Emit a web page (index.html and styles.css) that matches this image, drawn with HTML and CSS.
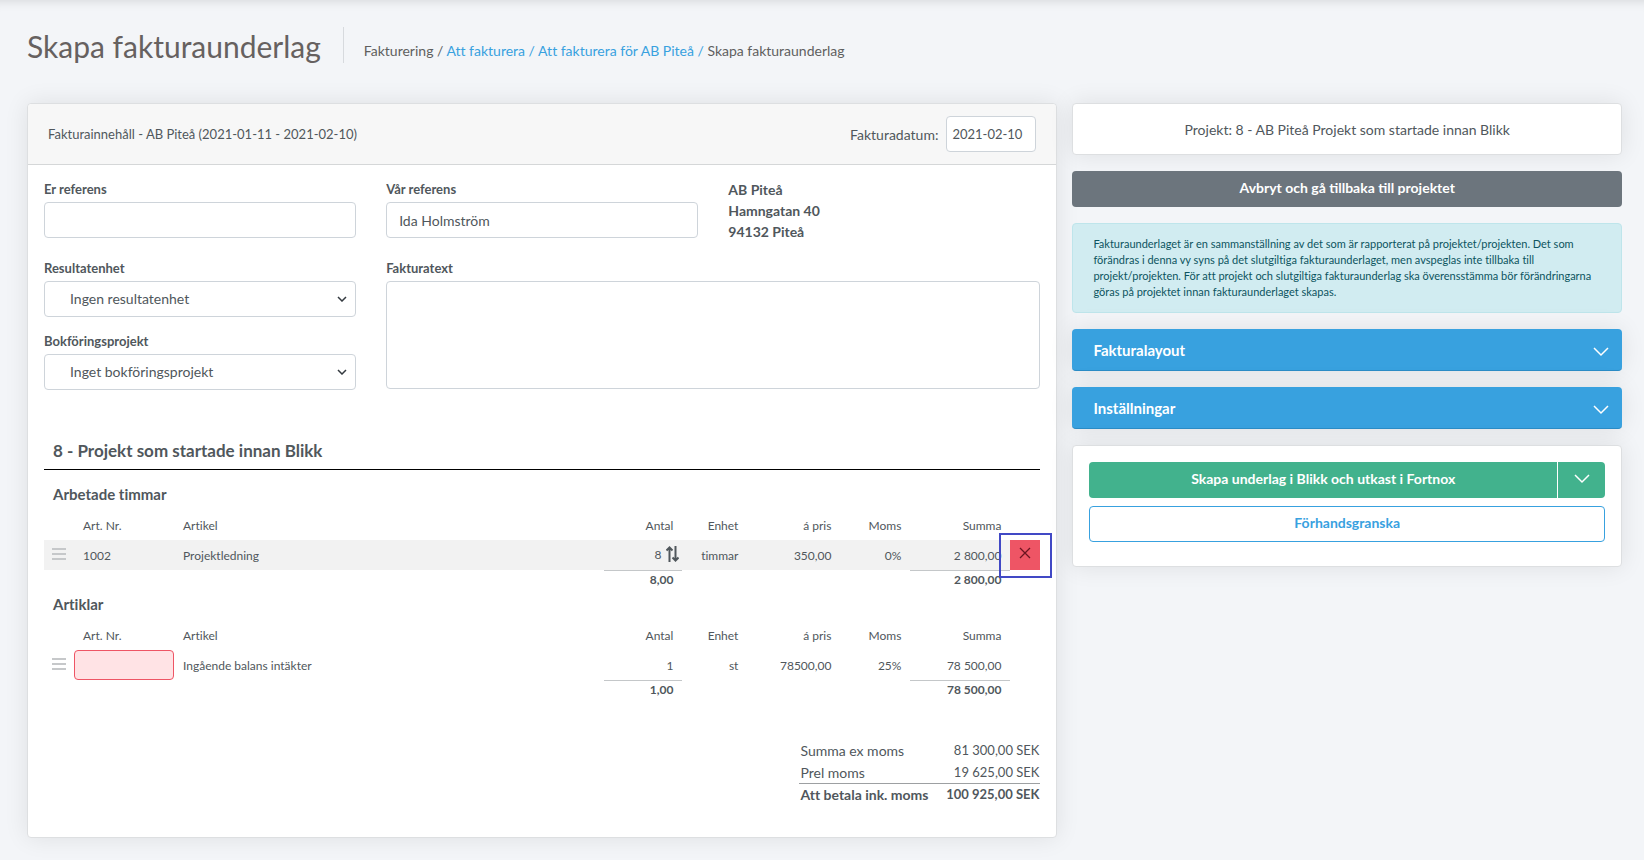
FILE: index.html
```html
<!DOCTYPE html>
<html lang="sv">
<head>
<meta charset="UTF-8">
<meta name="viewport" content="width=device-width, initial-scale=1.0">
<title>Skapa fakturaunderlag</title>
<link rel="stylesheet" href="styles.css">
</head>
<body>
<header class="page-header">
  <h1 class="page-title">Skapa fakturaunderlag</h1>
  <nav class="breadcrumb">
    Fakturering / <a href="#">Att fakturera /</a> <a href="#">Att fakturera för AB Piteå /</a> Skapa fakturaunderlag
  </nav>
</header>

<main class="layout">
  <section class="card">
    <div class="card-header">
      <span class="card-title">Fakturainnehåll - AB Piteå (2021-01-11 - 2021-02-10)</span>
      <div class="date-group">
        <label for="invoiceDate">Fakturadatum:</label>
        <input type="text" class="form-control date-input" id="invoiceDate" value="2021-02-10">
      </div>
    </div>

    <div class="card-body">
      <div class="form-grid">
        <div class="field">
          <label for="yourRef">Er referens</label>
          <input type="text" class="form-control" id="yourRef">
        </div>
        <div class="field">
          <label for="ourRef">Vår referens</label>
          <input type="text" class="form-control" id="ourRef" value="Ida Holmström">
        </div>
        <address class="address">AB Piteå<br>Hamngatan 40<br>94132 Piteå</address>
        <div class="field-stack">
          <div class="field">
            <label for="unit">Resultatenhet</label>
            <div class="select-wrap">
              <select class="form-control" id="unit">
                <option>Ingen resultatenhet</option>
              </select>
              <svg class="select-arrow" viewBox="0 0 10 6"><path d="M1 1l4 4 4-4"/></svg>
            </div>
          </div>
          <div class="field">
            <label for="bookProject">Bokföringsprojekt</label>
            <div class="select-wrap">
              <select class="form-control" id="bookProject">
                <option>Inget bokföringsprojekt</option>
              </select>
              <svg class="select-arrow" viewBox="0 0 10 6"><path d="M1 1l4 4 4-4"/></svg>
            </div>
          </div>
        </div>
        <div class="field field-wide">
          <label for="invoiceText">Fakturatext</label>
          <textarea class="form-control" id="invoiceText"></textarea>
        </div>
      </div>

      <h2 class="project-title">8 - Projekt som startade innan Blikk</h2>

      <h3 class="group-title">Arbetade timmar</h3>
      <table class="lines">
        <colgroup>
          <col class="col-handle"><col class="col-nr"><col><col class="col-qty"><col class="col-unit">
          <col class="col-price"><col class="col-vat"><col class="col-sum"><col class="col-handle">
        </colgroup>
        <thead>
          <tr>
            <th></th>
            <th>Art. Nr.</th>
            <th>Artikel</th>
            <th class="num">Antal</th>
            <th class="num">Enhet</th>
            <th class="num">á pris</th>
            <th class="num">Moms</th>
            <th class="num">Summa</th>
            <th></th>
          </tr>
        </thead>
        <tbody>
          <tr class="active">
            <td class="icon-cell"><svg class="handle" viewBox="0 0 14 12"><path d="M0 1h14M0 6h14M0 11h14"/></svg></td>
            <td>1002</td>
            <td>Projektledning</td>
            <td class="num qty-sort">8<svg class="sort" viewBox="0 0 13 16"><path d="M3.5 16V1.500M0.5 4.500l3-3 3 3M9.500 0v14.500M6.500 11.500l3 3 3-3"/></svg></td>
            <td class="num">timmar</td>
            <td class="num">350,00</td>
            <td class="num">0%</td>
            <td class="num">2 800,00</td>
            <td class="icon-cell remove-cell">
              <button type="button" class="remove" aria-label="Ta bort"><svg viewBox="0 0 12 12"><path d="M1 1l10 10M11 1L1 11"/></svg></button>
            </td>
          </tr>
        </tbody>
        <tfoot>
          <tr>
            <td colspan="3"></td>
            <td class="num total">8,00</td>
            <td colspan="3"></td>
            <td class="num total">2 800,00</td>
            <td></td>
          </tr>
        </tfoot>
      </table>

      <h3 class="group-title">Artiklar</h3>
      <table class="lines">
        <colgroup>
          <col class="col-handle"><col class="col-nr"><col><col class="col-qty"><col class="col-unit">
          <col class="col-price"><col class="col-vat"><col class="col-sum"><col class="col-handle">
        </colgroup>
        <thead>
          <tr>
            <th></th>
            <th>Art. Nr.</th>
            <th>Artikel</th>
            <th class="num">Antal</th>
            <th class="num">Enhet</th>
            <th class="num">á pris</th>
            <th class="num">Moms</th>
            <th class="num">Summa</th>
            <th></th>
          </tr>
        </thead>
        <tbody>
          <tr>
            <td class="icon-cell"><svg class="handle" viewBox="0 0 14 12"><path d="M0 1h14M0 6h14M0 11h14"/></svg></td>
            <td class="icon-cell"><input type="text" class="nr-input" aria-label="Art. Nr."></td>
            <td>Ingående balans intäkter</td>
            <td class="num">1</td>
            <td class="num">st</td>
            <td class="num">78500,00</td>
            <td class="num">25%</td>
            <td class="num">78 500,00</td>
            <td></td>
          </tr>
        </tbody>
        <tfoot>
          <tr>
            <td colspan="3"></td>
            <td class="num total">1,00</td>
            <td colspan="3"></td>
            <td class="num total">78 500,00</td>
            <td></td>
          </tr>
        </tfoot>
      </table>

      <table class="summary">
        <tr><td>Summa ex moms</td><td class="amount">81 300,00 SEK</td></tr>
        <tr><td>Prel moms</td><td class="amount">19 625,00 SEK</td></tr>
        <tr class="grand"><td>Att betala ink. moms</td><td class="amount">100 925,00 SEK</td></tr>
      </table>
    </div>
  </section>

  <aside class="sidebar">
    <div class="card project-card">Projekt: 8 - AB Piteå Projekt som startade innan Blikk</div>
    <button type="button" class="btn btn-secondary">Avbryt och gå tillbaka till projektet</button>
    <div class="alert">Fakturaunderlaget är en sammanställning av det som är rapporterat på projektet/projekten. Det som förändras i denna vy syns på det slutgiltiga fakturaunderlaget, men avspeglas inte tillbaka till projekt/projekten. För att projekt och slutgiltiga fakturaunderlag ska överensstämma bör förändringarna göras på projektet innan fakturaunderlaget skapas.</div>
    <button type="button" class="accordion">Fakturalayout <svg class="chevron" viewBox="0 0 16 10"><path d="M1 1l7 7 7-7"/></svg></button>
    <button type="button" class="accordion">Inställningar <svg class="chevron" viewBox="0 0 16 10"><path d="M1 1l7 7 7-7"/></svg></button>
    <div class="card actions">
      <div class="btn-group">
        <button type="button" class="btn btn-success">Skapa underlag i Blikk och utkast i Fortnox</button>
        <button type="button" class="btn btn-success btn-toggle" aria-label="Fler val"><svg class="chevron" viewBox="0 0 16 10"><path d="M1 1l7 7 7-7"/></svg></button>
      </div>
      <button type="button" class="btn btn-outline">Förhandsgranska</button>
    </div>
  </aside>
</main>
</body>
</html>
```
FILE: styles.css
```css
* {
  box-sizing: border-box;
}

body {
  margin: 0;
  min-height: 100vh;
  padding: 27px 22px 21px 27px;
  font-family: Lato, "Liberation Sans", sans-serif;
  font-size: 14px;
  line-height: 21px;
  font-variant-ligatures: none;
  color: #50575c;
  background-color: #f3f5f8;
  box-shadow: inset 0 12px 12px -12px rgba(0, 0, 0, 0.15);
}

input, select, textarea, button {
  font-family: inherit;
  font-size: 14px;
  color: inherit;
}

/* Page header */
.page-header {
  display: flex;
  height: 36px;
  margin-bottom: 40px;
}

.page-title {
  margin: 0;
  padding-right: 22px;
  border-right: 1px solid #d7dade;
  font-size: 30px;
  font-weight: 400;
  line-height: 38px;
  color: #666160;
}

.breadcrumb {
  padding: 14px 0 0 20px;
  line-height: 20px;
  color: #5f5f5f;
}

.breadcrumb a {
  color: #38a1df;
  text-decoration: none;
}

/* Layout */
.layout {
  display: grid;
  grid-template-columns: minmax(0, 15fr) minmax(0, 8fr);
  gap: 15px;
  align-items: start;
}

.card {
  background-color: #fff;
  border: 1px solid #dddfe1;
  border-radius: 4px;
  box-shadow: 0 0 24px rgba(0, 0, 0, 0.09);
}

.card-header {
  display: flex;
  align-items: center;
  justify-content: space-between;
  height: 61px;
  padding: 0 20px;
  border-bottom: 1px solid #d5d7d8;
  border-radius: 4px 4px 0 0;
  background-color: #f7f7f7;
}

.card-title {
  font-size: 13px;
}

.date-group {
  display: flex;
  align-items: center;
  gap: 8px;
}

.card-body {
  padding: 14px 16px 32px;
}

/* Form */
.form-control {
  display: block;
  width: 100%;
  height: 36px;
  padding: 0 12px;
  border: 1px solid #ced4da;
  border-radius: 4px;
  background-color: #fff;
  outline: none;
}

.date-input {
  width: 90px;
  padding: 0 5px;
  font-size: 13px;
}

.form-grid {
  display: grid;
  grid-template-columns: repeat(3, minmax(0, 1fr));
  gap: 16px 30px;
}

.field label {
  display: block;
  padding-bottom: 2px;
  font-size: 13px;
  font-weight: 700;
}

.field-stack {
  display: grid;
  gap: 14px;
}

.field-wide {
  grid-column: span 2;
}

textarea.form-control {
  height: 108px;
  resize: none;
}

.address {
  font-style: normal;
  font-weight: 700;
}

.select-wrap {
  position: relative;
}

select.form-control {
  appearance: none;
  padding: 0 25px 2px;
}

.select-arrow {
  position: absolute;
  right: 9px;
  top: 15px;
  width: 10px;
  height: 6px;
  fill: none;
  stroke: #343a40;
  stroke-width: 1.5;
}

/* Invoice lines */
.project-title {
  margin: 48px 0 0;
  padding: 0 9px 5px;
  border-bottom: 1px solid #000;
  font-size: 17px;
  font-weight: 700;
  line-height: 26px;
}

.group-title {
  margin: 12px 0 0;
  padding: 0 9px;
  font-size: 15px;
  font-weight: 700;
  line-height: 24px;
}

.lines + .group-title {
  margin-top: 4px;
}

.lines {
  width: 100%;
  border-collapse: separate;
  border-spacing: 0;
  table-layout: fixed;
  font-size: 12px;
  line-height: 17px;
}

.lines th,
.lines td {
  height: 30px;
  padding: 0 9px;
  text-align: left;
  font-weight: 400;
}

.lines th {
  height: 34px;
  padding-top: 4px;
}

.lines .num {
  text-align: right;
}

.lines .icon-cell {
  padding: 0;
  text-align: center;
}

.col-handle {
  width: 30px;
}

.col-nr,
.col-sum {
  width: 100px;
}

.col-qty {
  width: 78px;
}

.col-unit {
  width: 65px;
}

.col-price {
  width: 93px;
}

.col-vat {
  width: 70px;
}

.active td {
  background-color: #f2f2f2;
}

.lines tfoot td {
  height: 18px;
}

.lines tfoot .total {
  border-top: 1px solid #c4c7c9;
  font-weight: 700;
}

.handle {
  display: block;
  width: 14px;
  height: 12px;
  margin: 0 auto 3px 8px;
  stroke: #c6c8ca;
  stroke-width: 2;
}

.lines .qty-sort {
  padding-right: 3px;
}

.sort {
  width: 13px;
  height: 16px;
  margin: 0 0 2px 5px;
  vertical-align: middle;
  fill: none;
  stroke: #50575c;
  stroke-width: 2;
}

.remove-cell {
  position: relative;
}

/* Focus frame around the remove button */
.remove-cell::after {
  content: "";
  position: absolute;
  inset: -7px -12px -8px -11px;
  border: 2px solid #4149c5;
  pointer-events: none;
}

.remove {
  display: block;
  width: 30px;
  height: 30px;
  padding: 0 0 4px;
  border: none;
  background-color: #ee5565;
}

.remove svg {
  display: block;
  width: 12px;
  height: 12px;
  margin: 0 auto;
  stroke: #6b1420;
  stroke-width: 1.3;
}

.nr-input {
  display: block;
  width: 100px;
  height: 30px;
  border: 1px solid #ee5565;
  border-radius: 4px;
  background-color: #ffe3e5;
}

/* Summary */
.summary {
  width: 241px;
  margin: 41px 0 0 auto;
  border-collapse: separate;
  border-spacing: 0;
}

.summary td {
  height: 22px;
  padding: 0 1px;
  line-height: 21px;
}

.summary .amount {
  font-size: 13px;
  text-align: right;
}

.summary .grand td {
  border-top: 1px solid #9da0a2;
  font-weight: 700;
}

/* Sidebar */
.sidebar {
  display: grid;
  gap: 16px;
}

.project-card {
  padding: 15px 15px 14px;
  text-align: center;
}

.btn {
  width: 100%;
  height: 36px;
  padding: 0 12px 4px;
  border: none;
  border-radius: 4px;
  font-weight: 700;
  color: #fff;
}

.btn-secondary {
  background-color: #6c757d;
}

.btn-success {
  background-color: #42b28d;
}

.btn-outline {
  border: 1px solid #38a1df;
  background-color: #fff;
  color: #38a1df;
}

.alert {
  padding: 12px 20px;
  border: 1px solid #bee5eb;
  border-radius: 4px;
  background-color: #d1ecf1;
  font-size: 11px;
  line-height: 16px;
  color: #0c5460;
}

.accordion {
  display: flex;
  align-items: center;
  justify-content: space-between;
  height: 42px;
  padding: 0 13px 0 21px;
  border: none;
  border-bottom: 1px solid #2b8cc6;
  border-radius: 4px;
  background-color: #38a1df;
  box-shadow: 0 0 24px rgba(0, 0, 0, 0.09);
  font-size: 15px;
  font-weight: 700;
  color: #fff;
}

.chevron {
  width: 16px;
  height: 10px;
  fill: none;
  stroke: #fff;
  stroke-width: 1.5;
}

.accordion .chevron {
  margin-top: 4px;
}

.actions {
  padding: 16px 16px 24px;
}

.btn-group {
  display: flex;
  gap: 1px;
  margin-bottom: 8px;
}

.btn-group .btn:first-child {
  border-radius: 4px 0 0 4px;
}

.btn-group .btn-toggle {
  width: 47px;
  flex: none;
  border-radius: 0 4px 4px 0;
}
```
